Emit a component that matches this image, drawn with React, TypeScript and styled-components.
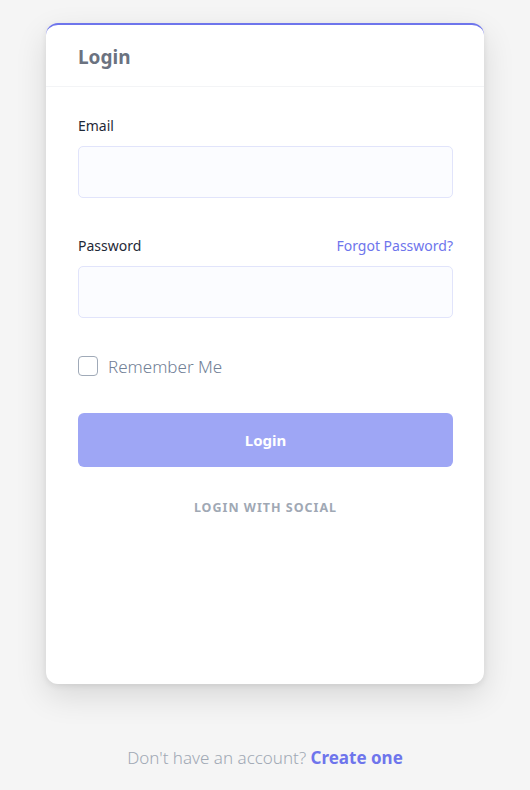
import styled, { createGlobalStyle } from "styled-components";

const GlobalStyle = createGlobalStyle`
    html, body {
        margin: 0;
        padding: 0;
        background: #f5f5f5;
        font-family: "Noto Sans", "Open Sans", sans-serif;
    }
    * { box-sizing: border-box; }
`;

const App = () => {
    return (
        <>
            <GlobalStyle />
            <Page>
                <Card>
                    <CardHeader>
                        <HeaderTitle>Login</HeaderTitle>
                    </CardHeader>
                    <CardBody>
                        <Field>
                            <LabelRow>
                                <Label>Email</Label>
                            </LabelRow>
                            <Input type="email" />
                        </Field>

                        <Field>
                            <LabelRow>
                                <Label>Password</Label>
                                <LinkText href="#">Forgot Password?</LinkText>
                            </LabelRow>
                            <Input type="password" />
                        </Field>

                        <CheckRow>
                            <CheckBox />
                            <CheckLabel>Remember Me</CheckLabel>
                        </CheckRow>

                        <SubmitButton>Login</SubmitButton>

                        <SocialTitle>Login with social</SocialTitle>
                    </CardBody>
                </Card>

                <Footer>
                    Don't have an account? <FooterLink href="#">Create one</FooterLink>
                </Footer>
            </Page>
        </>
    );
};

export default App;

const Page = styled.div`
    width: 530px;
    min-height: 790px;
    padding: 23px 46px 0;
    display: flex;
    flex-direction: column;
`;

const Card = styled.div`
    height: 661px;
    background: #fff;
    border-top: 2px solid #6e75ec;
    border-radius: 12px;
    box-shadow: 0 12px 32px rgba(0, 0, 0, 0.12), 0 2px 6px rgba(0, 0, 0, 0.08);
    display: flex;
    flex-direction: column;
`;

const CardHeader = styled.div`
    height: 62px;
    padding: 3px 32px 0;
    display: flex;
    align-items: center;
    border-bottom: 1px solid #f3f4f6;
`;

const HeaderTitle = styled.h2`
    margin: 0;
    font-size: 19px;
    font-weight: 700;
    color: #6b7280;
`;

const CardBody = styled.div`
    padding: 27px 31px 0 32px;
    display: flex;
    flex-direction: column;
`;

const Field = styled.div`
    display: flex;
    flex-direction: column;
    margin-bottom: 36px;
`;

const LabelRow = styled.div`
    display: flex;
    justify-content: space-between;
    align-items: center;
    height: 22px;
    margin-bottom: 10px;
`;

const Label = styled.label`
    font-size: 14px;
    font-weight: 400;
    color: #1f2937;
`;

const LinkText = styled.a`
    font-size: 14px;
    color: #6e75ec;
    text-decoration: none;
`;

const Input = styled.input`
    height: 52px;
    width: 100%;
    background: #fbfcff;
    border: 1px solid #e1e4fb;
    border-radius: 5px;
    outline: none;
    padding: 0 14px;
    font-size: 15px;
`;

const CheckRow = styled.div`
    display: flex;
    align-items: center;
    gap: 10px;
    margin-top: 2px;
    height: 20px;
`;

const CheckBox = styled.span`
    width: 20px;
    height: 20px;
    border: 1.5px solid #a0aab8;
    border-radius: 4px;
    background: #fff;
`;

const CheckLabel = styled.span`
    font-size: 17px;
    font-weight: 300;
    color: #718096;
`;

const SubmitButton = styled.button`
    margin-top: 37px;
    height: 54px;
    width: 100%;
    border: none;
    border-radius: 6px;
    background: #9ea6f5;
    color: #fff;
    font-family: inherit;
    font-size: 15px;
    font-weight: 700;
`;

const SocialTitle = styled.div`
    margin-top: 32px;
    text-align: center;
    text-transform: uppercase;
    font-size: 12.5px;
    font-weight: 700;
    letter-spacing: 1px;
    color: #a0a8b4;
`;

const Footer = styled.p`
    margin: 62px 0 0;
    text-align: center;
    font-size: 17px;
    font-weight: 300;
    color: #a0a8b4;
`;

const FooterLink = styled.a`
    color: #6e75ec;
    font-weight: 700;
    text-decoration: none;
`;
